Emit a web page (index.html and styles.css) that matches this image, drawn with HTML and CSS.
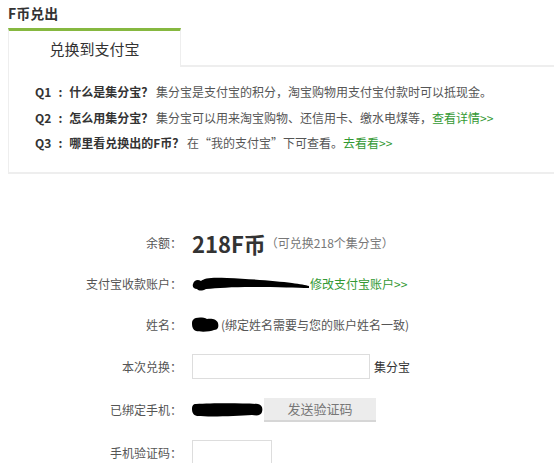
FILE: index.html
```html
<!DOCTYPE html>
<html lang="zh-CN">
<head>
    <meta charset="UTF-8">
    <title>F币兑出</title>
    <link rel="stylesheet" href="styles.css">
</head>
<body>
    <div class="page">
        <h2 class="title">F币兑出</h2>

        <!-- Tabs -->
        <div class="tabs">
            <div class="tab active">兑换到支付宝</div>
            <div class="tab-rest"></div>
        </div>

        <!-- FAQ panel -->
        <div class="faq">
            <p><b>Q1<i class="colon">:</i>什么是集分宝？</b> 集分宝是支付宝的积分，淘宝购物用支付宝付款时可以抵现金。</p>
            <p><b>Q2<i class="colon">:</i>怎么用集分宝？</b> 集分宝可以用来淘宝购物、还信用卡、缴水电煤等，<a href="#">查看详情&gt;&gt;</a></p>
            <p><b>Q3<i class="colon">:</i>哪里看兑换出的F币？</b> 在“我的支付宝”下可查看。<a href="#">去看看&gt;&gt;</a></p>
        </div>

        <!-- Exchange form -->
        <div class="exchange">
            <div class="row">
                <span class="label">余额：</span>
                <span class="value"><strong class="amount">218F币</strong><span class="hint">（可兑换218个集分宝）</span></span>
            </div>
            <div class="row">
                <span class="label">支付宝收款账户：</span>
                <span class="value">
                    <svg class="mask" width="118" height="16" viewBox="0 0 118 16">
                        <path d="M1 8 C2 4 6 3 9 5 C12 2 20 1 35 2 C60 3 85 5 100 7 C108 8 114 9 117 10 L117 12 C105 12 85 11 60 11 C40 11 25 12 14 13 C10 15 7 15 5 13 C2 13 0 11 1 8 Z" fill="#000"/>
                    </svg><a href="#">修改支付宝账户&gt;&gt;</a>
                </span>
            </div>
            <div class="row">
                <span class="label">姓名：</span>
                <span class="value">
                    <svg class="mask" width="27" height="15" viewBox="0 0 27 15">
                        <path d="M1 3 C3 0 11 0 15 2 C19 1 25 2 26 6 C27 10 26 13 22 13 C18 15 8 15 4 14 C1 13 0 10 0 7 C0 5 0 4 1 3 Z" fill="#000"/>
                    </svg><span class="note">(绑定姓名需要与您的账户姓名一致)</span>
                </span>
            </div>
            <div class="row tall">
                <span class="label">本次兑换：</span>
                <span class="value"><input class="field" type="text"><span class="unit">集分宝</span></span>
            </div>
            <div class="row tall">
                <span class="label">已绑定手机：</span>
                <span class="value">
                    <svg class="mask" width="71" height="14" viewBox="0 0 71 14">
                        <path d="M4 1 C20 0 50 0 66 1 C70 2 71 5 70 9 C69 12 66 13 60 12 C45 13 20 14 5 13 C1 12 0 9 0 6 C0 3 1 1 4 1 Z" fill="#000"/>
                    </svg><button class="send-btn" type="button">发送验证码</button>
                </span>
            </div>
            <div class="row tall">
                <span class="label">手机验证码：</span>
                <span class="value"><input class="field code" type="text"></span>
            </div>
        </div>
    </div>
</body>
</html>
```

FILE: styles.css
```css
body {
    margin: 0;
    padding: 0;
    background: #fff;
    font-family: "Microsoft YaHei", "Noto Sans CJK SC", sans-serif;
    font-size: 12px;
    color: #333;
    overflow: hidden;
}

.page {
    padding-left: 8px;
}

.title {
    margin: 0;
    height: 28px;
    line-height: 26px;
    font-size: 14px;
    font-weight: bold;
    color: #333;
}

/* Tabs */
.tabs {
    display: flex;
}

.tab {
    width: 171px;
    height: 36px;
    line-height: 36px;
    text-align: center;
    font-size: 15px;
    color: #333;
    border-top: 3px solid #86b840;
    border-left: 1px solid #eee;
    border-right: 1px solid #eee;
}

.tab-rest {
    flex: 1;
    border-bottom: 2px solid #eee;
}

/* FAQ panel */
.faq {
    border-left: 1px solid #eee;
    border-bottom: 2px solid #eee;
    padding: 12px 0 16px 26px;
}

.faq p {
    margin: 0;
    height: 25.5px;
    line-height: 25.5px;
    color: #555;
    white-space: nowrap;
}

.faq b {
    color: #333;
}

.faq .colon {
    display: inline-block;
    width: 18px;
    text-align: center;
    font-style: normal;
}

a {
    color: #339933;
    text-decoration: none;
}

/* Exchange form */
.exchange {
    display: flex;
    flex-direction: column;
    gap: 15px;
    padding-top: 56px;
}

.row {
    display: flex;
    align-items: center;
    height: 26px;
}

.row.tall {
    height: 28px;
}

.label {
    width: 174px;
    text-align: right;
    color: #555;
    flex-shrink: 0;
}

.value {
    display: flex;
    align-items: center;
    margin-left: 10px;
    white-space: nowrap;
}

.amount {
    font-size: 22px;
    color: #333;
}

.hint {
    color: #777;
}

.mask {
    display: block;
}

.note {
    margin-left: 2px;
    color: #555;
}

.field {
    width: 176px;
    height: 23px;
    padding: 0;
    border: 1px solid #ddd;
    outline: none;
    font-family: inherit;
}

.field.code {
    width: 78px;
}

.unit {
    margin-left: 4px;
    color: #333;
}

.send-btn {
    width: 112px;
    height: 24px;
    margin-left: 1px;
    border: none;
    border-bottom: 2px solid #d6d6d6;
    background: #ececec;
    color: #777;
    font-family: inherit;
    font-size: 13px;
}
```
